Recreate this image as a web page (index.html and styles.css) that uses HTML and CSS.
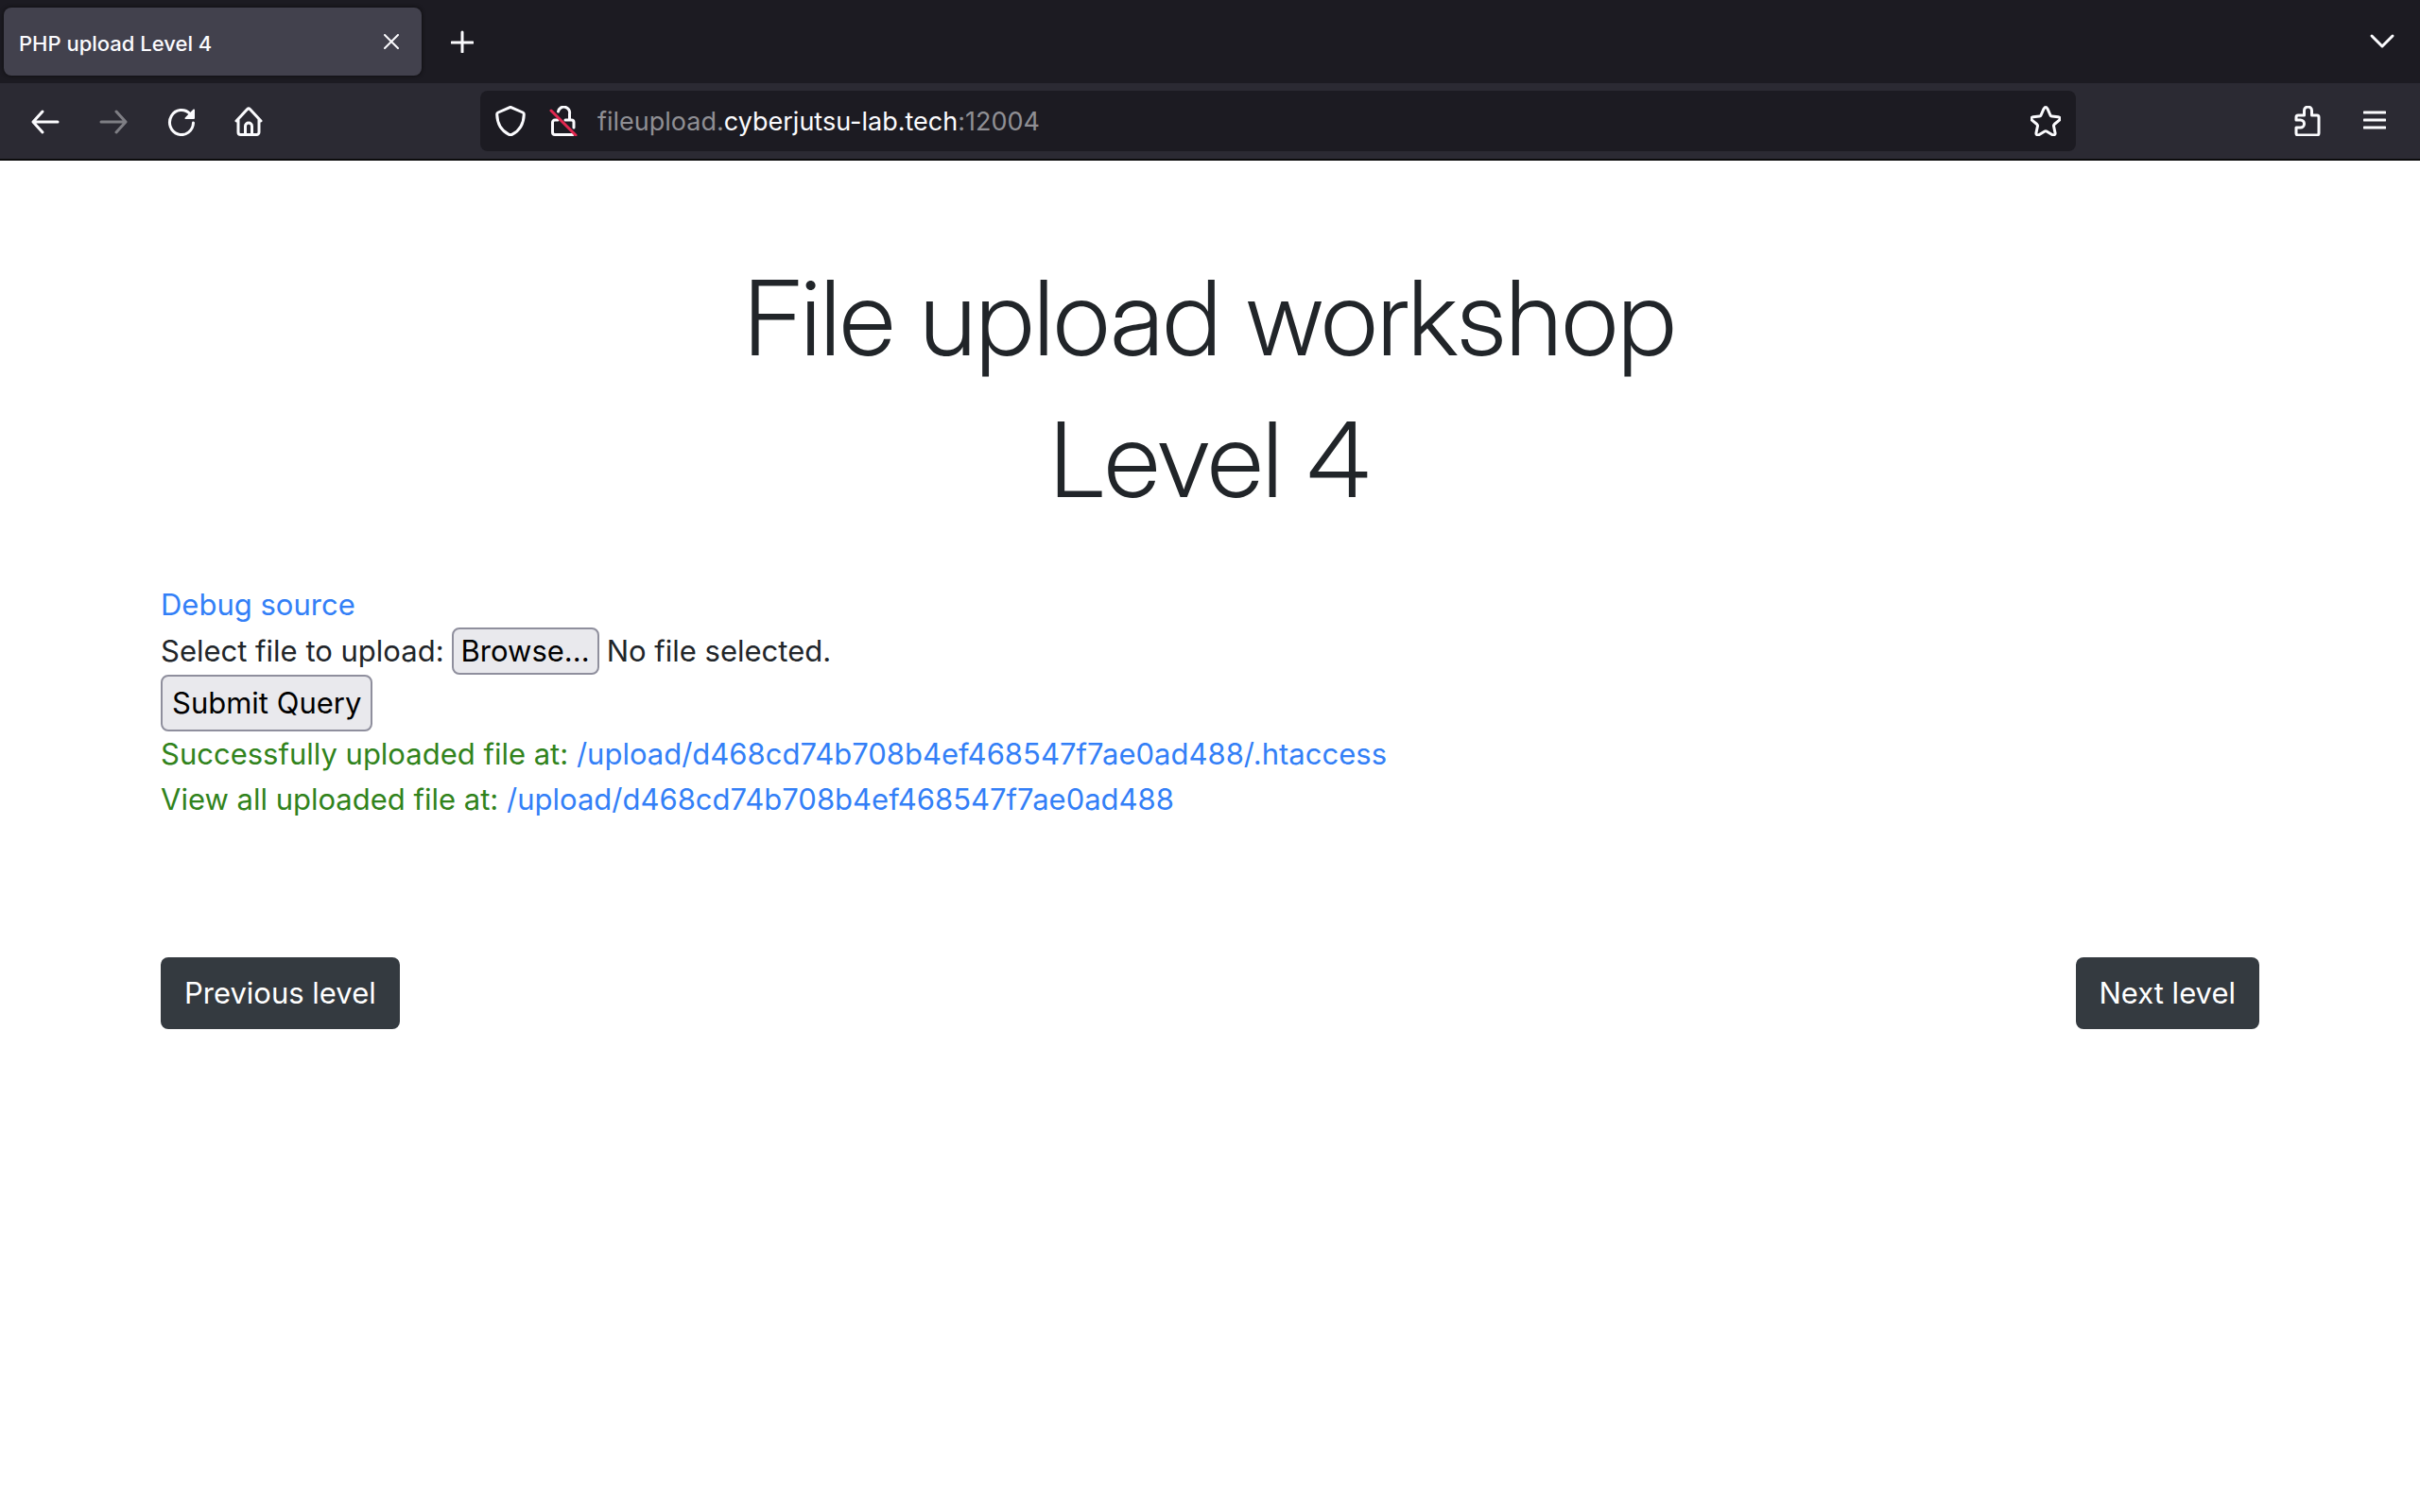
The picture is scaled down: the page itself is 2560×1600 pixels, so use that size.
FILE: index.html
```html
<!DOCTYPE html>
<html lang="en">
<head>
<meta charset="utf-8">
<title>PHP upload Level 4</title>
<link rel="stylesheet" href="styles.css">
</head>
<body>
<header class="browser">
  <div class="tabs">
    <div class="tab">
      <span class="tab-title">PHP upload Level 4</span>
      <button class="icon-btn close" aria-label="Close tab"><svg width="16" height="16" viewBox="0 0 16 16"><path d="M1 1l14 14M15 1L1 15"/></svg></button>
    </div>
    <button class="icon-btn new-tab" aria-label="New tab"><svg class="bold" width="24" height="24" viewBox="0 0 24 24"><path d="M12 2v21M1 13h22"/></svg></button>
    <button class="icon-btn list-tabs" aria-label="List all tabs"><svg class="bold" width="32" height="32" viewBox="0 0 32 32"><path d="M5 10l11 11 11-11"/></svg></button>
  </div>
  <div class="toolbar">
    <nav class="controls" aria-label="Browser">
      <button class="icon-btn" aria-label="Back"><svg class="bold" width="32" height="32" viewBox="0 0 32 32"><path d="M29 17H4M13 6L3 17l10 11"/></svg></button>
      <button class="icon-btn" aria-label="Forward" disabled><svg class="bold" width="32" height="32" viewBox="0 0 32 32"><path d="M3 17h25M19 6l10 11-10 11"/></svg></button>
      <button class="icon-btn" aria-label="Reload"><svg class="bold" width="32" height="32" viewBox="0 0 32 32"><path d="M28.500 18A12.500 13 0 1 1 25 8.500"/><path class="solid" d="M30 4.500V13a1 1 0 0 1-1 1h-8.500c-.900 0-1.300-1-.700-1.600l8.600-8.600c.600-.600 1.600-.200 1.600.700z"/></svg></button>
      <button class="icon-btn" aria-label="Home"><svg class="bold" width="32" height="32" viewBox="0 0 32 32"><path d="M2 16L13.600 3.600a2 2 0 0 1 2.800 0L28 16M4 14.500v13.500A2.500 2.500 0 0 0 6.500 30.500h17a2.500 2.500 0 0 0 2.500-2.500V14.500M11.500 30V21.500a3.500 3.500 0 0 1 7 0V30"/></svg></button>
    </nav>
    <div class="address">
      <svg class="bold" width="32" height="32" viewBox="0 0 32 32"><path d="M16 1.300L29 7c1 .500 1.300 1 1.300 2C30 18 26 26 18 30.200q-2 1-4 0C6 26 2 18 1.700 9c0-1 .300-1.500 1.300-2z"/></svg>
      <svg class="bold" width="32" height="32" viewBox="0 0 32 32"><path d="M10.500 6a6 6 0 0 1 12 2.500V14M18 15h6.500A2.500 2.500 0 0 1 27 17.500V23M26 30.500H7A2.500 2.500 0 0 1 4.500 28V17.500A2.500 2.500 0 0 1 7 15h3"/><path class="slash" d="M3 5l26 26"/></svg>
      <div class="url"><span>fileupload.<b>cyberjutsu-lab.tech</b>:12004</span><input type="text" aria-label="Address"></div>
      <button class="icon-btn" aria-label="Bookmark this page"><svg class="bold" width="32" height="32" viewBox="0 0 32 32"><path d="M14 3.200q2-3.400 4 0L21 10q.400 1 1.500 1.100l6.700.700c2.300.400 2.500 2.200 1.300 3.400L25.200 19.500q-.900.800-.700 1.800L26 28.500c.400 2-1.200 3-2.800 2.200L17 27q-1-.600-2 0l-6.200 3.700C7.200 31.500 5.600 30.500 6 28.500l1.500-7.200q.200-1-.700-1.800L1.500 15.200C.300 14 .500 12.200 2.800 11.800l6.700-.700Q10.600 11 11 10z"/></svg></button>
    </div>
    <div class="extras">
      <button class="icon-btn" aria-label="Extensions"><svg class="bold" width="32" height="32" viewBox="0 0 32 32"><path d="M5 15V12A2 2 0 0 1 7 10h6.500V5a4 4 0 0 1 8 0v5H27a2 2 0 0 1 2 2v17a2 2 0 0 1-2 2H7a2 2 0 0 1-2-2v-6h4.500a4 4 0 0 0 0-8z"/></svg></button>
      <button class="icon-btn" aria-label="Menu"><svg class="bold" width="24" height="24" viewBox="0 0 24 24"><path d="M1 3h22M1 11h22M1 19h22"/></svg></button>
    </div>
  </div>
</header>
<main class="container">
  <h1>File upload workshop</h1>
  <h1>Level 4</h1>
  <section class="content">
    <a href="#debug">Debug source</a>
    <form>
      <div class="file-row">
        <label for="file">Select file to upload:</label>
        <input class="file-input" type="file" id="file" tabindex="-1">
        <button class="native browse" type="button">Browse...</button>
        <span>No file selected.</span>
      </div>
      <button class="native submit" type="button">Submit Query</button>
    </form>
    <p class="success">Successfully uploaded file at: <a href="#file">/upload/d468cd74b708b4ef468547f7ae0ad488/.htaccess</a></p>
    <p class="success">View all uploaded file at: <a href="#folder">/upload/d468cd74b708b4ef468547f7ae0ad488</a></p>
  </section>
  <nav class="levels" aria-label="Levels">
    <button class="level">Previous level</button>
    <button class="level">Next level</button>
  </nav>
</main>
</body>
</html>
```
FILE: styles.css
```css
* { box-sizing: border-box; }

body {
  margin: 0;
  background: #fff;
  color: #212529;
  font: 400 31px/48px Inter, "Liberation Sans", sans-serif;
}

button, input { font: inherit; }

svg {
  display: block;
  flex: none;
  fill: none;
  stroke: #fbfbfe;
  stroke-width: 2;
  stroke-linecap: round;
  stroke-linejoin: round;
}
svg.bold { stroke-width: 3; }
svg .solid { fill: #fbfbfe; stroke: none; }
svg .slash { stroke: #e22850; }

/* Browser window */
.browser {
  background: #1c1b22;
  border-bottom: 2px solid #0c0c0d;
}
.icon-btn {
  flex: none;
  padding: 0;
  border: 0;
  background: none;
}
.icon-btn:disabled { opacity: .4; }
.tabs {
  display: flex;
  align-items: center;
  height: 88px;
  padding: 0 24px 0 4px;
}
.tab {
  display: flex;
  align-items: center;
  justify-content: space-between;
  width: 442px;
  height: 72px;
  padding: 0 24px 0 16px;
  border-radius: 8px;
  background: #42414d;
  box-shadow: 0 0 4px #0c0c0d;
}
.tab-title {
  padding-top: 4px;
  color: #fbfbfe;
  font-size: 22px;
  font-weight: 500;
}
.new-tab { margin-left: 31px; }
.list-tabs { margin-left: auto; }
.toolbar {
  display: flex;
  align-items: center;
  height: 80px;
  padding: 0 36px 0 32px;
  background: #2b2a33;
}
.controls, .extras {
  display: flex;
  align-items: center;
  gap: 40px;
}
.extras { gap: 44px; }
.address {
  display: flex;
  align-items: center;
  flex: 1;
  gap: 24px;
  height: 64px;
  margin: 0 228px;
  padding: 0 16px;
  border-radius: 8px;
  background: #1c1b22;
}
.url {
  position: relative;
  flex: 1;
  margin-left: -4px;
  padding-top: 2px;
  color: #8f8f94;
  font-size: 27px;
}
.url b {
  color: #fbfbfe;
  font-weight: 400;
}
.url input {
  position: absolute;
  inset: 0;
  width: 100%;
  border: 0;
  outline: 0;
  background: none;
  color: #fbfbfe;
}

/* Page */
.container {
  max-width: 2280px;
  margin: 0 auto;
  padding: 99px 30px;
}
h1 {
  margin: 0 0 16px;
  font-family: "Inter Display", Inter, "Liberation Sans", sans-serif;
  font-size: 110px;
  font-weight: 300;
  line-height: 134px;
  text-align: center;
}
.content { padding-top: 47px; }
a {
  color: #337ff7;
  text-decoration: none;
}
.file-row {
  display: flex;
  align-items: center;
  gap: 8px;
}
.file-input {
  position: absolute;
  opacity: 0;
  pointer-events: none;
}
.native {
  display: block;
  padding: 0 10px;
  border: 2px solid #8f8f9d;
  border-radius: 8px;
  background: #e9e9ed;
  color: #000;
}
.browse {
  height: 50px;
  padding: 0 8px;
  line-height: 46px;
}
.submit { height: 60px; }
p { margin: 0; }
.success { color: #31831c; }
.levels {
  display: flex;
  justify-content: space-between;
  margin-top: 143px;
}
.level {
  padding: 12px 23px;
  border: 2px solid #343a40;
  border-radius: 8px;
  background: #343a40;
  color: #fff;
}
```
